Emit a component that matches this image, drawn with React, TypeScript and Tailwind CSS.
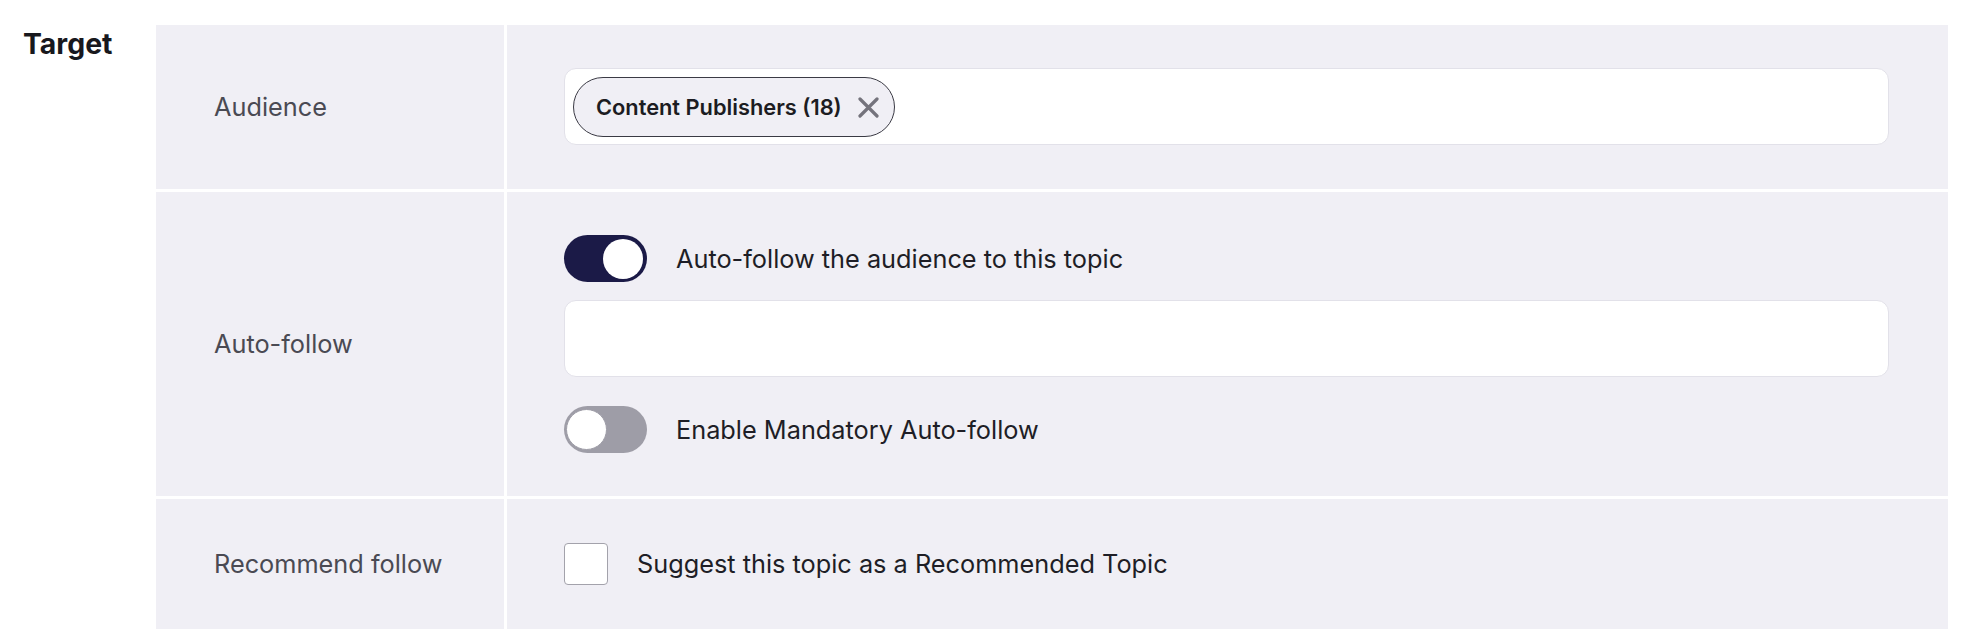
import React from "react";

function Toggle({ on }: { on: boolean }) {
  return on ? (
    <div className="flex h-[47px] w-[83px] shrink-0 items-center justify-end rounded-full bg-[#1b1a47] pr-[4px]">
      <div className="h-[40px] w-[40px] rounded-full bg-white" />
    </div>
  ) : (
    <div className="flex h-[47px] w-[83px] shrink-0 items-center justify-start rounded-full bg-[#9e9da7] pl-[2px]">
      <div className="h-[41px] w-[41px] rounded-full border-[1px] border-[#9e9da7] bg-white" />
    </div>
  );
}

export default function App() {
  return (
    <div
      className="flex h-[640px] w-[1970px] bg-white pt-[25px]"
      style={{ fontFamily: "Inter, 'Noto Sans', sans-serif" }}
    >
      <div className="w-[156px] shrink-0 pl-[23px]">
        <h2 className="text-[28.4px] font-bold leading-[38px] text-[#18181d]">Target</h2>
      </div>
      <div className="flex w-[1792px] flex-col gap-[3px]">
        {/* Audience */}
        <div className="flex gap-[3px]">
          <div className="flex w-[348px] shrink-0 items-center bg-[#f0eff5] pl-[58px] text-[25.3px] text-[#4a4a53]">
            Audience
          </div>
          <div className="flex-1 bg-[#f0eff5] pb-[44px] pl-[57px] pr-[59px] pt-[43px]">
            <div className="flex h-[77px] items-start rounded-[12px] border border-[#e2e1e9] bg-white p-[8px]">
              <div className="flex h-[60px] items-center gap-[16px] rounded-full border border-[#3a3a44] bg-[#f0eff5] pl-[22px] pr-[15px]">
                <span className="text-[21.8px] font-semibold text-[#1c1c22]">Content Publishers (18)</span>
                <svg width="21" height="21" viewBox="0 0 21 21" fill="none">
                  <path d="M2 2 L19 19 M19 2 L2 19" stroke="#74737c" strokeWidth="3.2" strokeLinecap="round" />
                </svg>
              </div>
            </div>
          </div>
        </div>
        {/* Auto-follow */}
        <div className="flex gap-[3px]">
          <div className="flex w-[348px] shrink-0 items-center bg-[#f0eff5] pl-[58px] text-[25.3px] text-[#4a4a53]">
            Auto-follow
          </div>
          <div className="flex flex-1 flex-col bg-[#f0eff5] pb-[43px] pl-[57px] pr-[59px] pt-[43px]">
            <div className="flex items-center gap-[29px]">
              <Toggle on />
              <span className="text-[25.3px] text-[#1e1e26]">Auto-follow the audience to this topic</span>
            </div>
            <div className="mt-[18px] h-[77px] rounded-[12px] border border-[#e2e1e9] bg-white" />
            <div className="mt-[29px] flex items-center gap-[29px]">
              <Toggle on={false} />
              <span className="text-[25.3px] text-[#1e1e26]">Enable Mandatory Auto-follow</span>
            </div>
          </div>
        </div>
        {/* Recommend follow */}
        <div className="flex gap-[3px]">
          <div className="flex w-[348px] shrink-0 items-center bg-[#f0eff5] pl-[58px] text-[25.3px] text-[#4a4a53]">
            Recommend follow
          </div>
          <div className="flex flex-1 items-center gap-[29px] bg-[#f0eff5] pb-[44px] pl-[57px] pr-[59px] pt-[44px]">
            <div className="h-[42px] w-[44px] shrink-0 rounded-[4px] border border-[#a3a2ab] bg-white" />
            <span className="text-[25.3px] text-[#1e1e26]">Suggest this topic as a Recommended Topic</span>
          </div>
        </div>
      </div>
    </div>
  );
}
